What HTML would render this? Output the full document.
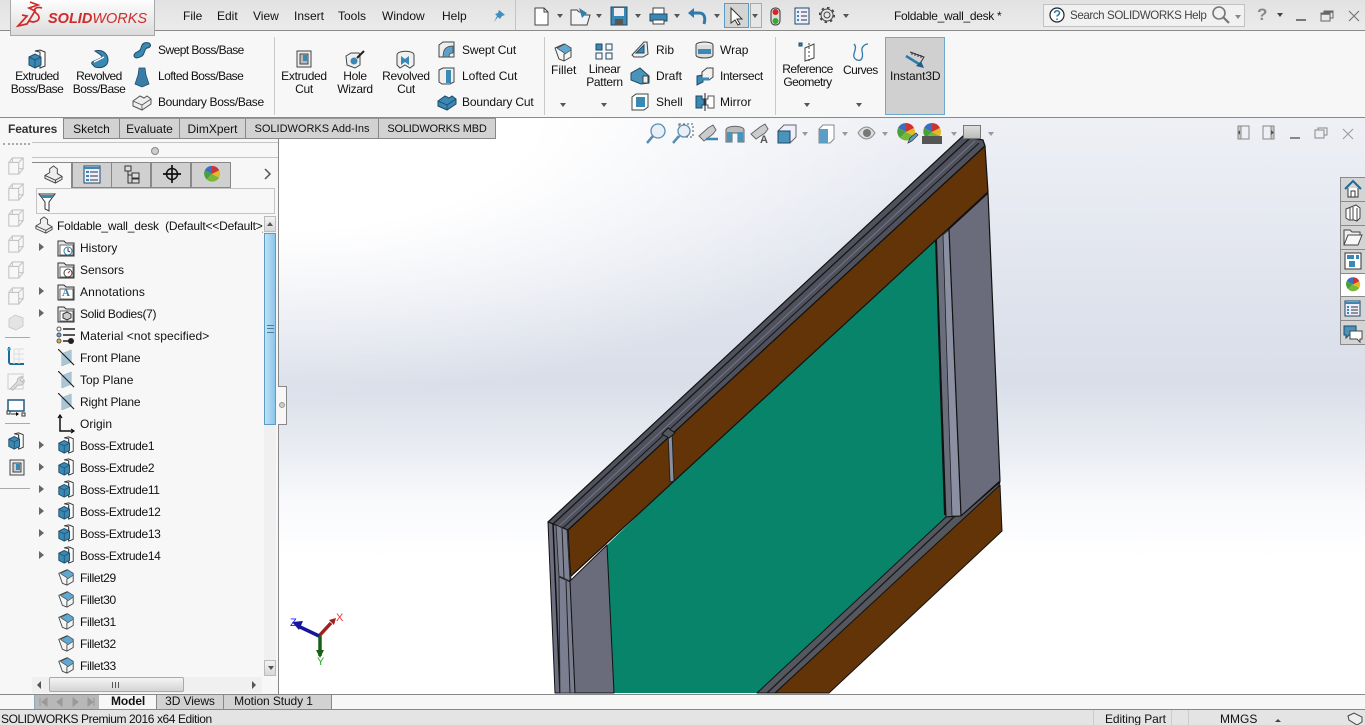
<!DOCTYPE html>
<html><head><meta charset="utf-8"><style>
html,body{margin:0;padding:0;width:1365px;height:725px;overflow:hidden;background:#fff}
body{position:relative;font:12px/14px "Liberation Sans",sans-serif;color:#111}
.a{position:absolute}
.t{position:absolute;white-space:nowrap}
.n{letter-spacing:-.35px}
.m{letter-spacing:-.15px}
.c{position:absolute;text-align:center;line-height:13px;white-space:nowrap;transform:translateX(-50%);letter-spacing:-.3px}
.b{letter-spacing:-.55px}
.tab{position:absolute;top:118px;height:21px;background:#d2d2d2;border-right:1px solid #888;border-bottom:1px solid #888;border-top:1px solid #999;box-sizing:border-box;text-align:center;line-height:20px}
.ft{position:absolute;top:162px;height:26px;width:40px;background:#d0d0d0;border:1px solid #888;box-sizing:border-box}
.tp{position:absolute;left:1340px;width:25px;background:#d4d4d4;border:1px solid #8a8a8a;border-right:0;box-sizing:border-box}
svg{position:absolute;overflow:visible}
.dd{position:absolute;width:0;height:0;border-left:3.5px solid transparent;border-right:3.5px solid transparent;border-top:4px solid #555}
.ar{position:absolute;left:39px;width:0;height:0;border-top:4px solid transparent;border-bottom:4px solid transparent;border-left:5px solid #666}
.btab{position:absolute;top:695px;height:14px;line-height:13px;text-align:center;background:#d2d2d2;border-right:1px solid #888;box-sizing:border-box;letter-spacing:-.1px}
</style></head><body>
<svg width="0" height="0" style="position:absolute">
<defs>
<symbol id="ext" viewBox="0 0 20 20"><path d="M8 2l5-1 5 2v14l-5 2V3z" fill="#fff" stroke="#333" stroke-width="1"/><path d="M13 3v16" stroke="#333"/><path d="M2 8l6-3 6 3v8l-6 3-6-3z" fill="#3a88b4" stroke="#1d4a66"/><path d="M2 8l6 3 6-3M8 11v8" fill="none" stroke="#1d4a66" stroke-width=".8"/></symbol>
<symbol id="fil" viewBox="0 0 20 20"><path d="M2 6l4 11 5 2 7-4V6l-7-4z" fill="#f5f5f5" stroke="#444"/><path d="M4 6c3 3 6 3 8 6l6-4V6l-6-4z" fill="#5fa8d0" stroke="#444" stroke-width=".7"/><path d="M11 19v-7" stroke="#444"/></symbol>
<symbol id="pln" viewBox="0 0 18 18"><path d="M4 5l10-4v13L4 18z" fill="#a9c6d6" stroke="#8aa" stroke-width=".5"/><path d="M0 0l17 17" stroke="#222" stroke-width="1.2"/></symbol>
<symbol id="fol" viewBox="0 0 18 18"><path d="M1 17V2h6l2 2h8v13z" fill="#e8e8e8" stroke="#333"/><rect x="3" y="6" width="13" height="10" fill="#fff" stroke="#444" stroke-width=".8"/></symbol>
<symbol id="cube" viewBox="0 0 20 20"><path d="M6 6V1h12v12h-5M2 6h11v13H2zM2 6l4-5M13 6l5-5M13 19l5-6" fill="none" stroke="#c4c4c4" stroke-width="1.2"/></symbol>
<symbol id="ball" viewBox="0 0 20 20"><path d="M10 10L10 1a9 9 0 0 1 8 5z" fill="#c33"/><path d="M10 10L2 6a9 9 0 0 1 8-5z" fill="#3a6fc0"/><path d="M10 10L2 6a9 9 0 0 0 2 10z" fill="#4a9f3a"/><path d="M10 10L4 16a9 9 0 0 0 14-2z" fill="#7ab63a"/><path d="M10 10l8-4a9 9 0 0 1 0 8z" fill="#e8b820"/></symbol>
<symbol id="part" viewBox="0 0 20 20"><path d="M1 11l5-3V4l4-3 4 3v5l5 3v3l-7 4-11-5z" fill="#eee" stroke="#444"/><path d="M1 11l11 5 7-4M12 16v3" fill="none" stroke="#444"/></symbol>
</defs></svg>

<!-- top bar -->
<div class="a" style="left:0;top:0;width:1365px;height:30px;background:linear-gradient(#e2e2e2,#ebebeb);border-bottom:1px solid #8a8a8a"></div>
<div class="a" style="left:0;top:31px;width:1365px;height:86px;background:#f7f7f7;border-bottom:1px solid #8a8a8a"></div>
<div class="a" style="left:10px;top:-2px;width:143px;height:36px;background:linear-gradient(#fff,#e6e6e6 70%,#dcdcdc);border:1px solid #a8a8a8;box-sizing:content-box"></div>
<svg style="left:15px;top:1px" width="30" height="28" fill="none" stroke="#cf2a2a" stroke-width="1.7"><path d="M15 1l8 3-9 3 6 3-8 13-9 2 9-10-5-1"/><path d="M27 7c-7-2-9 2-6 5 4 3 5 8-3 9l-4-1"/></svg>
<div class="t" style="left:48px;top:11px;font:italic bold 14.5px/16px 'Liberation Sans',sans-serif;color:#cf2a2a">SOLID<span style="font-weight:normal">WORKS</span></div>
<div class="t" style="left:183px;top:9px">File</div><div class="t" style="left:217px;top:9px">Edit</div><div class="t" style="left:253px;top:9px">View</div><div class="t" style="left:294px;top:9px">Insert</div><div class="t" style="left:338px;top:9px">Tools</div><div class="t" style="left:382px;top:9px">Window</div><div class="t" style="left:442px;top:9px">Help</div>
<svg style="left:492px;top:9px" width="14" height="14"><path d="M7 1l6 5-3 1-2 3-2-2-4 5 3-6-2-2 3-1z" fill="#3d8fc0"/></svg>
<div class="a" style="left:515px;top:0;width:1px;height:30px;background:#c4c4c4"></div>

<!-- QAT -->
<svg style="left:533px;top:7px" width="18" height="20"><path d="M2 1h9l4 4v13H2z" fill="#fff" stroke="#444"/><path d="M11 1v4h4" fill="none" stroke="#444"/></svg>
<div class="dd" style="left:557px;top:14px"></div>
<svg style="left:570px;top:7px" width="22" height="20"><path d="M1 18V3h6l2 2h5v3h6l-3 10z" fill="#f4f4f4" stroke="#444"/><path d="M9 1l8 5-5 5z" fill="#2f80ad"/></svg>
<div class="dd" style="left:596px;top:14px"></div>
<svg style="left:610px;top:6px" width="18" height="20"><path d="M1 1h16v18H1z" fill="#3a88b4" stroke="#1d4a66"/><rect x="4" y="2" width="10" height="8" fill="#eee"/><rect x="5" y="13" width="8" height="6" fill="#555"/></svg>
<div class="dd" style="left:635px;top:14px"></div>
<svg style="left:649px;top:7px" width="19" height="19"><rect x="4" y="1" width="11" height="6" fill="#fff" stroke="#444"/><rect x="1" y="7" width="17" height="7" fill="#3a88b4" stroke="#1d4a66"/><rect x="4" y="13" width="11" height="4" fill="#fff" stroke="#444"/></svg>
<div class="dd" style="left:674px;top:14px"></div>
<svg style="left:687px;top:7px" width="20" height="18" fill="none"><path d="M6 6h6c5 0 7 4 5 11" stroke="#2f7aa8" stroke-width="3"/><path d="M7 1L1 6l6 5z" fill="#2f7aa8"/></svg>
<div class="dd" style="left:714px;top:14px"></div>
<div class="a" style="left:724px;top:3px;width:25px;height:25px;background:#d4d4d4;border:1px solid #5a9cc4;box-sizing:border-box"></div>
<svg style="left:729px;top:7px" width="16" height="19"><path d="M2 1v15l4-3 3 5 2-1-3-5h5z" fill="#fff" stroke="#333"/></svg>
<div class="a" style="left:750px;top:3px;width:12px;height:25px;background:#e6e6e6;border:1px solid #aaa;box-sizing:border-box"></div>
<div class="dd" style="left:752px;top:14px"></div>
<svg style="left:770px;top:7px" width="12" height="20"><rect x="1" y="1" width="9" height="17" rx="4" fill="#ddd" stroke="#333"/><circle cx="5.5" cy="5" r="3" fill="#d22"/><circle cx="5.5" cy="14" r="3" fill="#3a3"/></svg>
<svg style="left:794px;top:7px" width="16" height="18"><rect x="1" y="1" width="14" height="16" fill="#eef" stroke="#1d4a66"/><path d="M3 5h2M3 9h2M3 13h2" stroke="#3a88b4" stroke-width="2"/><path d="M7 5h6M7 9h6M7 13h6" stroke="#333"/></svg>
<svg style="left:819px;top:7px" width="16" height="16" fill="none" stroke="#444"><circle cx="8" cy="8" r="3"/><circle cx="8" cy="8" r="6"/><circle cx="8" cy="8" r="7.3" stroke-dasharray="2.5 3.2" stroke-width="1.6"/></svg>
<div class="dd" style="left:843px;top:14px"></div>
<div class="t" style="left:894px;top:9px;letter-spacing:-.3px">Foldable_wall_desk *</div>

<!-- search -->
<div class="a" style="left:1043px;top:4px;width:202px;height:23px;background:#f1f1f1;border:1px solid #c2c2c2;box-sizing:border-box"></div>
<svg style="left:1049px;top:7px" width="16" height="16"><circle cx="8" cy="8" r="7" fill="#fff" stroke="#222" stroke-width="1.2"/><path d="M5.5 6c.4-3 5-3 5 0 0 2-2.5 2-2.5 3.5M8 11.5v1.5" fill="none" stroke="#2a7fae" stroke-width="1.6"/></svg>
<div class="t" style="left:1070px;top:9px;color:#444;letter-spacing:-.42px;font-size:11.6px">Search SOLIDWORKS Help</div>
<svg style="left:1211px;top:5px" width="20" height="20" fill="none" stroke="#777" stroke-width="1.6"><circle cx="8" cy="8" r="6"/><path d="M12 12l6 6" stroke-width="2.2"/></svg>
<div class="dd" style="left:1235px;top:15px;border-top-color:#888"></div>
<div class="t" style="left:1257px;top:5px;font:bold 17px/20px 'Liberation Sans',sans-serif;color:#888">?</div>
<div class="dd" style="left:1277px;top:13px;border-top-color:#444"></div>
<div class="a" style="left:1296px;top:19px;width:10px;height:2px;background:#777"></div>
<svg style="left:1320px;top:10px" width="14" height="12" fill="none" stroke="#666"><path d="M4 3V1h9v7h-3"/><rect x="1" y="3" width="9" height="8"/><path d="M1 4h9M4 2h9" stroke-width="1.5"/></svg>
<svg style="left:1348px;top:10px" width="12" height="12" stroke="#777" stroke-width="1.2"><path d="M1 1l10 10M11 1L1 11"/></svg>

<!-- ribbon icons and text -->
<svg style="left:27px;top:49px" width="20" height="20"><use href="#ext"/></svg>
<div class="c b" style="left:37px;top:70px">Extruded<br>Boss/Base</div>
<svg style="left:90px;top:49px" width="20" height="20"><path d="M5 2c8-2 13 3 13 9s-6 9-13 7l-3-3c-2-3 5-3 10-7 0-2-3-3-7-6z" fill="#3a88b4" stroke="#1d4a66"/><path d="M4 13l10-5" stroke="#fff" stroke-width="1.5"/></svg>
<div class="c b" style="left:99px;top:70px">Revolved<br>Boss/Base</div>
<svg style="left:132px;top:41px" width="20" height="18"><path d="M2 15c0-5 6-3 7-8s4-6 8-5c3 2 1 5-2 5-3 1-2 6-5 8-3 2-7 3-8 0z" fill="#3a88b4" stroke="#1d4a66"/></svg>
<div class="t b" style="left:158px;top:43px">Swept Boss/Base</div>
<svg style="left:134px;top:67px" width="16" height="20"><path d="M5 1h6l1 7 3 9-7 3-7-3 3-9z" fill="#3a7ca8" stroke="#1d4a66" stroke-width=".7"/></svg>
<div class="t b" style="left:158px;top:69px">Lofted Boss/Base</div>
<svg style="left:132px;top:93px" width="20" height="18"><path d="M1 8l7-5 4 2 3-2 4 3v5l-9 6-9-4z" fill="#eee" stroke="#555"/><path d="M1 8l9 4 9-6M10 12v5" fill="none" stroke="#555" stroke-width=".8"/></svg>
<div class="t n" style="left:158px;top:95px">Boundary Boss/Base</div>
<div class="a" style="left:274px;top:37px;width:1px;height:78px;background:#c8c8c8"></div>
<svg style="left:296px;top:50px" width="16" height="18"><rect x="1" y="1" width="14" height="16" fill="#eee" stroke="#444"/><rect x="4" y="4" width="8" height="10" fill="#bbb" stroke="#444"/><rect x="7" y="5" width="4" height="6" fill="#3a88b4"/></svg>
<div class="c" style="left:304px;top:70px">Extruded<br>Cut</div>
<svg style="left:345px;top:50px" width="20" height="20"><path d="M1 6l5-3h8l1 3v9l-5 3-8-3z" fill="#f0f0f0" stroke="#444"/><circle cx="9" cy="11" r="3.5" fill="#3a88b4"/><path d="M12 8l7-7" stroke="#222" stroke-width="2"/></svg>
<div class="c" style="left:355px;top:70px">Hole<br>Wizard</div>
<svg style="left:396px;top:50px" width="20" height="20"><path d="M1 5c0-5 17-5 17 0v10l-4 3-5-3-5 3-3-3z" fill="#f0f0f0" stroke="#444"/><path d="M5 6l4 3 4-3v9l-4-3-4 3z" fill="#3a88b4"/></svg>
<div class="c" style="left:406px;top:70px">Revolved<br>Cut</div>
<svg style="left:438px;top:41px" width="18" height="18"><path d="M1 4l4-3h11v15H1z" fill="#eee" stroke="#444"/><path d="M5 16c0-8 3-11 10-11v7c-3 0-4 1-4 4z" fill="#5fa0c8" stroke="#444" stroke-width=".7"/></svg>
<div class="t m" style="left:462px;top:43px">Swept Cut</div>
<svg style="left:438px;top:67px" width="17" height="18"><path d="M1 3l4-2h11v14l-4 2H4l-3-2z" fill="#eee" stroke="#444"/><path d="M8 3h5v13H8z" fill="#3a88b4"/></svg>
<div class="t" style="left:462px;top:69px">Lofted Cut</div>
<svg style="left:437px;top:93px" width="20" height="18"><path d="M1 8l7-5 4 2 3-2 4 3v5l-9 6-9-4z" fill="#3a88b4" stroke="#1d4a66"/><path d="M1 8l9 4 9-6M10 12v5" fill="none" stroke="#1d4a66" stroke-width=".8"/></svg>
<div class="t m" style="left:462px;top:95px">Boundary Cut</div>
<div class="a" style="left:544px;top:37px;width:1px;height:78px;background:#c8c8c8"></div>
<svg style="left:553px;top:42px" width="20" height="20"><use href="#fil"/></svg>
<div class="t" style="left:551px;top:63px">Fillet</div>
<div class="dd" style="left:560px;top:103px"></div>
<svg style="left:595px;top:43px" width="18" height="17" fill="none" stroke="#1d4a66"><rect x="1" y="1" width="6" height="6" fill="#3a88b4"/><rect x="11" y="1" width="6" height="6"/><rect x="1" y="10" width="6" height="6"/><rect x="11" y="10" width="6" height="6"/></svg>
<div class="c" style="left:604.5px;top:63px">Linear<br>Pattern</div>
<div class="dd" style="left:601px;top:103px"></div>
<svg style="left:631px;top:41px" width="18" height="18"><path d="M1 14L13 1h3l1 12-5 3H3z" fill="#eee" stroke="#444"/><path d="M5 12l8-8v8z" fill="#3a88b4" stroke="#1d4a66"/></svg>
<div class="t" style="left:656px;top:43px">Rib</div>
<svg style="left:630px;top:67px" width="20" height="18"><path d="M1 6l9-5 9 8v7l-8 1-10-4z" fill="#4a94bc" stroke="#1d4a66"/><path d="M13 9h5v7h-5z" fill="#eee" stroke="#444"/></svg>
<div class="t" style="left:656px;top:69px">Draft</div>
<svg style="left:631px;top:93px" width="18" height="18"><path d="M1 4l4-3h12v13l-4 3H1z" fill="#fff" stroke="#444"/><path d="M5 4h9v10H5z" fill="#3a88b4"/></svg>
<div class="t" style="left:656px;top:95px">Shell</div>
<svg style="left:695px;top:41px" width="19" height="18"><ellipse cx="9.5" cy="4" rx="8.5" ry="3" fill="#eee" stroke="#444"/><path d="M1 4v10c0 4 17 4 17 0V4" fill="#ddd" stroke="#444"/><rect x="3" y="8" width="13" height="5" fill="#3a88b4"/></svg>
<div class="t" style="left:720px;top:43px">Wrap</div>
<svg style="left:696px;top:67px" width="18" height="19"><path d="M1 9l6-1v7l-6 3z" fill="#3a88b4" stroke="#1d4a66"/><path d="M6 5l5-4h6v9l-4 3H6z" fill="#f0f0f0" stroke="#444"/><path d="M4 12h9" stroke="#3a88b4" stroke-width="3"/></svg>
<div class="t n" style="left:720px;top:69px">Intersect</div>
<svg style="left:695px;top:93px" width="20" height="18"><path d="M1 3h6v3h2v6H7v3H1z" fill="#3a88b4" stroke="#1d4a66"/><path d="M19 3h-6v3h-2v6h2v3h6z" fill="#fff" stroke="#555"/><path d="M10 0v18" stroke="#222"/></svg>
<div class="t" style="left:720px;top:95px">Mirror</div>
<div class="a" style="left:775px;top:37px;width:1px;height:78px;background:#c8c8c8"></div>
<svg style="left:798px;top:42px" width="18" height="20"><rect x="1" y="1" width="3" height="3" fill="#3a88b4" stroke="#1d4a66"/><path d="M7 6l9-4v14l-9 3z" fill="#fff" stroke="#444"/><path d="M11 1v18" stroke="#444" stroke-dasharray="2 2"/></svg>
<div class="c b" style="left:807.5px;top:63px">Reference<br>Geometry</div>
<div class="dd" style="left:804px;top:103px"></div>
<svg style="left:851px;top:43px" width="18" height="19" fill="none" stroke="#2f7aa8" stroke-width="1.3"><path d="M3 1c5 5-5 12 3 16 6 2 6-5 5-9-1-4 3-7 6-7"/></svg>
<div class="t b" style="left:843px;top:63px">Curves</div>
<div class="dd" style="left:856px;top:103px"></div>
<div class="a" style="left:885px;top:37px;width:60px;height:78px;background:#d0d0d0;border:1px solid #6fa8cc;box-sizing:border-box"></div>
<svg style="left:905px;top:50px" width="20" height="19"><path d="M5 2l14 5-3 5" fill="none" stroke="#333"/><path d="M7 2v3M10 3v3M13 4v3M16 5v3" stroke="#333"/><path d="M1 6l13 8" stroke="#2f7aa8" stroke-width="2.5"/><path d="M11 16l8 2-3-7z" fill="#1f5f86"/></svg>
<div class="t" style="left:890px;top:69px;letter-spacing:-.1px">Instant3D</div>

<!-- viewport -->
<div class="a" style="left:279px;top:118px;width:1086px;height:576px;background:radial-gradient(ellipse 640px 280px at 0 0,#fff 40%,rgba(255,255,255,0) 100%),linear-gradient(#eef0f5 0,#e6e9f1 100px,#dde1eb 210px,#d9dee9 265px,#e9ecf2 330px,#f9fafc 385px,#fff 440px)"></div>

<svg style="left:0;top:0" width="1365" height="694" viewBox="0 0 1365 694">
<g stroke-linejoin="round">
<!-- green -->
<polygon points="607,545 672,482 936,240 946,517 757,693 614,693" fill="#07846a"/>
<!-- inner strip right -->
<polygon points="936,238 950,228 962,516 946,517" fill="#6a6d7c" stroke="#111" stroke-width="1"/>
<polygon points="943,235 949,230 961,516 952,516" fill="#8b8fa2" stroke="#222" stroke-width=".8"/>
<line x1="936" y1="240" x2="945" y2="515" stroke="#111" stroke-width="2"/>
<!-- upper right panel -->
<polygon points="949,229 988,193 1000,481 961,516" fill="#6a6c7b" stroke="#111" stroke-width="1.2"/>
<!-- top grey strip -->
<polygon points="548,522 963,136 983,140 985,146 568,530 558,526" fill="#4f515c" stroke="#111" stroke-width="1.2"/>
<line x1="553" y1="524" x2="970" y2="138" stroke="#16161a" stroke-width="1.3"/>
<line x1="558" y1="527" x2="975" y2="141" stroke="#74778a" stroke-width="1"/>
<line x1="562" y1="529" x2="979" y2="143" stroke="#16161a" stroke-width="1"/>
<!-- brown -->
<polygon points="568,530 985,146 988,192 570,577" fill="#623408" stroke="#111" stroke-width="1.2"/>
<!-- divider -->
<polygon points="668,432 672,431 674,481 670,482" fill="#8b8fa2" stroke="#222" stroke-width="1"/>
<polygon points="662,434 668,428 675,433 669,438" fill="#55575f" stroke="#111" stroke-width="1"/>
<!-- left strips -->
<polygon points="548,522 558,526 568,530 571,582 575,693 555,693" fill="#6d6f80" stroke="#111" stroke-width="1"/>
<polygon points="556,525 567,530 570,581 559,576" fill="#7f8294" stroke="#222" stroke-width=".8"/>
<line x1="553" y1="524" x2="560" y2="693" stroke="#111" stroke-width="1.5"/>
<line x1="562" y1="528" x2="564" y2="578" stroke="#222" stroke-width="1"/>
<polygon points="559,577 570,582 575,693 560,693" fill="#7b7e90" stroke="#222" stroke-width=".8"/>
<line x1="566" y1="581" x2="570" y2="693" stroke="#222" stroke-width="1"/>
<!-- lower left panel -->
<polygon points="570,581 607,545 614,693 575,693" fill="#6a6c7b" stroke="#111" stroke-width="1"/>
<!-- bottom grey strip -->
<polygon points="946,517 961,516 1000,482 998,488 775,693 757,693" fill="#55575f" stroke="#111" stroke-width="1"/>
<line x1="955" y1="516" x2="767" y2="693" stroke="#1a1a20" stroke-width="1.3"/>
<!-- bottom brown -->
<polygon points="1000,485 1002,531 829,693 775,693" fill="#623408" stroke="#111" stroke-width="1"/>
</g>
</svg>
<!-- triad -->
<svg style="left:285px;top:610px" width="60" height="60"><path d="M34 26L46 13" stroke="#a02020" stroke-width="3.5"/><path d="M44 10l7-2-2 7z" fill="#a02020"/><path d="M34 26L13 16" stroke="#16169c" stroke-width="3.5"/><path d="M18 11L7 12l7 8z" fill="#16169c"/><path d="M35 26v20" stroke="#176017" stroke-width="3.5"/><path d="M31 40h8l-4 8z" fill="#176017"/></svg>
<div class="t" style="left:290px;top:616px;color:#22f;font-size:11px">Z</div>
<div class="t" style="left:336px;top:611px;color:#e33;font-size:11px">X</div>
<div class="t" style="left:317px;top:655px;color:#2a2;font-size:11px">Y</div>

<!-- heads-up -->
<svg style="left:645px;top:123px" width="22" height="22"><circle cx="13" cy="8" r="7" fill="#e8f0f6" stroke="#5a8db0" stroke-width="1.3"/><path d="M8 13l-6 7" stroke="#5a8db0" stroke-width="2.5"/></svg>
<svg style="left:672px;top:123px" width="22" height="22"><rect x="7" y="1" width="14" height="13" fill="none" stroke="#555" stroke-dasharray="2 2"/><circle cx="12" cy="8" r="6" fill="#e8f0f6" stroke="#5a8db0" stroke-width="1.3"/><path d="M7 13l-6 7" stroke="#5a8db0" stroke-width="2.5"/></svg>
<svg style="left:698px;top:124px" width="22" height="20"><path d="M1 12l9-8 5-3 3 5-3 4-9 7z" fill="#ccc" stroke="#666"/><path d="M8 15h12" stroke="#3a88b4" stroke-width="2.5"/></svg>
<svg style="left:725px;top:125px" width="20" height="18"><path d="M1 5c0-5 18-5 18 0v12h-6V8H7v9H1z" fill="#bbb" stroke="#666"/><rect x="2" y="7" width="5" height="10" fill="#4a94bc"/><rect x="13" y="7" width="5" height="10" fill="#4a94bc"/></svg>
<svg style="left:750px;top:123px" width="20" height="20"><path d="M1 11l9-7 5-3 3 5-3 4-9 6z" fill="#ccc" stroke="#666"/></svg>
<div class="t" style="left:760px;top:133px;font-weight:bold;color:#555;font-size:11px">A</div>
<svg style="left:777px;top:124px" width="20" height="20"><path d="M1 7l6-6h12v12l-6 6H1z" fill="#eef" stroke="#666"/><rect x="1" y="7" width="12" height="12" fill="#4a94bc" stroke="#1d4a66"/></svg>
<div class="dd" style="left:802px;top:132px;border-top-color:#999"></div>
<svg style="left:818px;top:124px" width="17" height="20"><path d="M1 5l4-4h11v14l-4 4H1z" fill="#fff" stroke="#888"/><rect x="1" y="5" width="9" height="14" fill="#5a9fc6"/></svg>
<div class="dd" style="left:842px;top:132px;border-top-color:#999"></div>
<svg style="left:857px;top:125px" width="19" height="16"><path d="M1 8c5-8 12-8 17 0-5 8-12 8-17 0z" fill="#ddd" stroke="#888"/><circle cx="10" cy="8" r="4" fill="#777"/></svg>
<div class="dd" style="left:882px;top:132px;border-top-color:#999"></div>
<svg style="left:896px;top:122px" width="20" height="20"><use href="#ball"/></svg>
<svg style="left:907px;top:132px" width="11" height="12"><path d="M1 11l2-5 6-5 2 2-6 6z" fill="#5a9fc6" stroke="#333" stroke-width=".7"/></svg>
<svg style="left:922px;top:122px" width="20" height="20"><use href="#ball"/></svg>
<div class="a" style="left:922px;top:136px;width:20px;height:8px;background:#555"></div>
<div class="dd" style="left:951px;top:132px;border-top-color:#999"></div>
<div class="a" style="left:963px;top:125px;width:18px;height:14px;background:linear-gradient(#ddd,#bbb);border:1px solid #777;box-sizing:border-box"></div>
<div class="dd" style="left:988px;top:132px;border-top-color:#999"></div>

<!-- viewport window controls -->
<svg style="left:1237px;top:125px" width="14" height="16"><rect x="1" y="1" width="11" height="13" fill="none" stroke="#888"/><path d="M1 1h3v13H1z" fill="#ccc" stroke="#888"/><path d="M3 5v5l-2-2.5z" fill="#555"/></svg>
<svg style="left:1262px;top:125px" width="14" height="16"><rect x="1" y="1" width="11" height="13" fill="none" stroke="#888"/><path d="M9 1h3v13H9z" fill="#ccc" stroke="#888"/><path d="M9 5v5l3-2.5z" fill="#555"/></svg>
<div class="a" style="left:1290px;top:137px;width:10px;height:2px;background:#888"></div>
<svg style="left:1314px;top:127px" width="14" height="12" fill="none" stroke="#888"><path d="M4 3V1h9v7h-3"/><rect x="1" y="3" width="9" height="8"/></svg>
<svg style="left:1342px;top:128px" width="12" height="12" stroke="#999"><path d="M1 1l10 10M11 1L1 11"/></svg>

<!-- task pane -->
<div class="tp" style="top:177px;height:25px"></div><div class="tp" style="top:201px;height:25px"></div><div class="tp" style="top:225px;height:25px"></div><div class="tp" style="top:249px;height:25px"></div><div class="tp" style="top:273px;height:24px;background:#fff"></div><div class="tp" style="top:296px;height:25px"></div><div class="tp" style="top:320px;height:25px"></div>
<svg style="left:1344px;top:180px" width="18" height="18"><path d="M1 9l8-8 8 8" fill="none" stroke="#1d6a96" stroke-width="2"/><path d="M4 8v9h10V8" fill="#fff" stroke="#333"/><rect x="7" y="11" width="4" height="6" fill="none" stroke="#333"/></svg>
<svg style="left:1345px;top:204px" width="16" height="18" fill="#fff" stroke="#444"><path d="M1 5l10-4 4 3v10l-3 3-3-1H4l-3-2z"/><path d="M5 4v12M8 3v13M12 4v13"/></svg>
<svg style="left:1343px;top:228px" width="20" height="18"><path d="M1 17V2h6l2 2h8v3" fill="#eee" stroke="#444"/><path d="M1 17l4-10h14l-4 10z" fill="#f8f8f8" stroke="#444"/></svg>
<svg style="left:1344px;top:252px" width="18" height="18"><rect x="1" y="1" width="16" height="16" fill="#fff" stroke="#333"/><path d="M3 3h7v4H3zM5 9h6v6H5z" fill="#3a88b4"/><path d="M12 3h3v4h-3z" fill="#3a88b4"/></svg>
<svg style="left:1345px;top:276px" width="16" height="17" viewBox="0 0 20 20"><use href="#ball"/></svg>
<svg style="left:1344px;top:300px" width="17" height="17"><rect x="1" y="1" width="15" height="15" fill="#eef" stroke="#1d4a66"/><path d="M1 3h15" stroke="#3a88b4" stroke-width="2"/><path d="M3 7h2M3 10h2M3 13h2" stroke="#3a88b4" stroke-width="2"/><path d="M7 7h7M7 10h7M7 13h7" stroke="#333"/></svg>
<svg style="left:1343px;top:325px" width="20" height="18"><path d="M1 1h12v9H6l-3 3v-3H1z" fill="#4a94bc" stroke="#1d4a66"/><path d="M7 6h12v8h-2v3l-3-3H7z" fill="#fff" stroke="#444"/></svg>

<!-- tabs -->
<div class="a" style="left:0;top:118px;width:64px;height:22px;background:#f7f7f7;border-right:1px solid #888;box-sizing:border-box"></div>
<div class="t" style="left:8px;top:122px;font-weight:bold;color:#333;letter-spacing:-.1px">Features</div>
<div class="tab" style="left:64px;width:56px">Sketch</div><div class="tab" style="left:120px;width:60px">Evaluate</div><div class="tab" style="left:180px;width:66px">DimXpert</div><div class="tab" style="left:246px;width:133px;font-size:11px">SOLIDWORKS Add-Ins</div><div class="tab" style="left:379px;width:117px;font-size:11px;letter-spacing:-.2px">SOLIDWORKS MBD</div>

<!-- left panel -->
<div class="a" style="left:0;top:139px;width:279px;height:555px;background:#f7f7f7;border-right:1px solid #888;box-sizing:border-box"></div>
<div class="a" style="left:3px;top:143px;width:27px;height:0;border-top:2px dotted #aaa"></div>
<div class="a" style="left:32px;top:142px;width:246px;height:1px;background:#c4c4c4"></div>
<div class="a" style="left:32px;top:157px;width:246px;height:1px;background:#c4c4c4"></div>
<div class="a" style="left:151px;top:147px;width:6px;height:6px;background:#ccc;border:1px solid #888;border-radius:50%"></div>
<svg style="left:7px;top:157px" width="18" height="18"><use href="#cube"/></svg>
<svg style="left:7px;top:183px" width="18" height="18"><use href="#cube"/></svg>
<svg style="left:7px;top:209px" width="18" height="18"><use href="#cube"/></svg>
<svg style="left:7px;top:235px" width="18" height="18"><use href="#cube"/></svg>
<svg style="left:7px;top:261px" width="18" height="18"><use href="#cube"/></svg>
<svg style="left:7px;top:287px" width="18" height="18"><use href="#cube"/></svg>
<svg style="left:7px;top:313px" width="18" height="18"><path d="M2 6l6-4 8 3v8l-7 4-7-3z" fill="#e4e4e4" stroke="#ccc"/></svg>
<div class="a" style="left:5px;top:337px;width:25px;height:1px;background:#aaa"></div>
<svg style="left:6px;top:346px" width="20" height="19"><path d="M3 1v15c0 1 1 2 2 2h13" fill="none" stroke="#1d6a96" stroke-width="2"/><path d="M8 3h10M8 8h10M8 13h10M8 3v15M13 3v15" stroke="#ddd"/><path d="M1 3l3-2 1 3-3 1z" fill="#3a9fd0"/></svg>
<svg style="left:7px;top:373px" width="18" height="18"><rect x="1" y="1" width="15" height="15" fill="none" stroke="#ccc"/><path d="M3 16l7-7c0-4 3-6 6-5l-3 3 2 2 2-2c1 3-2 6-6 5l-5 5z" fill="#ddd" stroke="#bbb"/></svg>
<svg style="left:6px;top:399px" width="20" height="20"><rect x="2" y="1" width="16" height="11" fill="#fff" stroke="#1d5a80" stroke-width="1.5"/><rect x="1" y="12" width="3" height="3" fill="#fff" stroke="#333"/><path d="M5 15h7" stroke="#333"/><path d="M10 13l3 2-3 2z"/><rect x="16" y="14" width="3" height="3" fill="#fff" stroke="#333"/></svg>
<div class="a" style="left:5px;top:423px;width:25px;height:1px;background:#aaa"></div>
<svg style="left:7px;top:432px" width="18" height="18"><use href="#ext"/></svg>
<svg style="left:9px;top:459px" width="16" height="17"><rect x="1" y="1" width="14" height="15" fill="#eee" stroke="#444"/><rect x="4" y="4" width="8" height="9" fill="#ccc" stroke="#444"/><rect x="7" y="5" width="4" height="6" fill="#3a88b4"/></svg>
<div class="a" style="left:0;top:488px;width:30px;height:1px;background:#aaa"></div>

<!-- feature manager tabs -->
<div class="a" style="left:32px;top:162px;width:40px;height:27px;border-top:1px solid #888;border-right:1px solid #888;box-sizing:border-box"></div>
<svg style="left:44px;top:165px" width="19" height="19"><use href="#part"/></svg>
<div class="ft" style="left:72px"></div><div class="ft" style="left:111px"></div><div class="ft" style="left:151px"></div><div class="ft" style="left:191px"></div>
<svg style="left:83px;top:165px" width="18" height="19"><rect x="1" y="1" width="16" height="17" fill="#eef" stroke="#1d4a66"/><path d="M1 3h16" stroke="#3a88b4" stroke-width="2"/><path d="M3 7h3M3 11h3M3 15h3" stroke="#3a88b4" stroke-width="2"/><path d="M7 7h8M7 11h8M7 15h8" stroke="#333"/></svg>
<svg style="left:124px;top:165px" width="16" height="19" fill="#ddd" stroke="#333"><rect x="1" y="1" width="6" height="5"/><rect x="8" y="8" width="7" height="5"/><path d="M4 6v12h4M4 10h4" fill="none"/><rect x="8" y="14" width="7" height="4"/></svg>
<svg style="left:163px;top:165px" width="18" height="18" fill="none" stroke="#111" stroke-width="1.5"><circle cx="9" cy="9" r="5.5"/><path d="M9 0v18M0 9h18" stroke-width="1.7"/></svg>
<svg style="left:203px;top:165px" width="18" height="18" viewBox="0 0 20 20"><use href="#ball"/></svg>
<svg style="left:264px;top:168px" width="8" height="12" fill="none" stroke="#555" stroke-width="1.5"><path d="M1 1l5 5-5 5"/></svg>
<div class="a" style="left:36px;top:188px;width:239px;height:26px;border:1px solid #c4c4c4;box-sizing:border-box"></div>
<svg style="left:38px;top:192px" width="18" height="20"><path d="M1 2h16L11 10v9l-4-2v-7z" fill="#fff" stroke="#333"/><path d="M2 3h14l-2 3H4z" fill="#3a88b4"/></svg>

<!-- tree -->
<svg style="left:35px;top:216px" width="18" height="18"><use href="#part"/></svg>
<div class="t" style="left:57px;top:219px;width:206px;overflow:hidden;letter-spacing:-.2px">Foldable_wall_desk&nbsp; (Default&lt;&lt;Default&gt;_Display</div>

<div class="ar" style="top:243px"></div><svg style="left:57px;top:239px" width="18" height="18"><use href="#fol"/></svg><svg style="left:62px;top:245px" width="11" height="11"><circle cx="6" cy="6" r="4" fill="#fff" stroke="#2f7aa8"/><path d="M6 3v3l2 1" stroke="#333" fill="none"/></svg><div class="t" style="left:80px;top:241px">History</div>
<svg style="left:57px;top:261px" width="18" height="18"><use href="#fol"/></svg><svg style="left:62px;top:267px" width="11" height="11"><circle cx="6" cy="6" r="4" fill="#fff" stroke="#444"/><path d="M6 6l2-2" stroke="#d22"/></svg><div class="t" style="left:80px;top:263px">Sensors</div>
<div class="ar" style="top:287px"></div><svg style="left:57px;top:283px" width="18" height="18"><use href="#fol"/></svg><div class="t" style="left:62px;top:287px;font:bold 11px/12px 'Liberation Serif',serif;color:#2f7aa8">A</div><div class="t" style="left:80px;top:285px;letter-spacing:.15px">Annotations</div>
<div class="ar" style="top:309px"></div><svg style="left:57px;top:305px" width="18" height="18"><use href="#fol"/></svg><svg style="left:62px;top:311px" width="10" height="10"><path d="M1 3l4-2 4 2v4l-4 2-4-2z" fill="#ccc" stroke="#333"/></svg><div class="t n" style="left:80px;top:307px">Solid Bodies(7)</div>
<svg style="left:56px;top:326px" width="20" height="20"><circle cx="3" cy="3" r="2" fill="#fff" stroke="#555"/><circle cx="3" cy="9" r="2" fill="#5fa8d0" stroke="#555"/><circle cx="3" cy="15" r="2" fill="#e8b820" stroke="#555"/><path d="M7 3h12M7 9h12M7 15h6" stroke="#222" stroke-width="1.5"/><circle cx="15" cy="15" r="3" fill="#222"/></svg><div class="t" style="left:80px;top:329px;letter-spacing:.08px">Material &lt;not specified&gt;</div>
<svg style="left:58px;top:349px" width="17" height="17"><use href="#pln"/></svg><div class="t m" style="left:80px;top:351px">Front Plane</div>
<svg style="left:58px;top:371px" width="17" height="17"><use href="#pln"/></svg><div class="t" style="left:80px;top:373px">Top Plane</div>
<svg style="left:58px;top:393px" width="17" height="17"><use href="#pln"/></svg><div class="t m" style="left:80px;top:395px">Right Plane</div>
<svg style="left:57px;top:414px" width="19" height="19" fill="none" stroke="#111" stroke-width="1.5"><path d="M3 2v15h14"/><path d="M1 4l2-3 2 3M14 15l3 2-3 2" stroke-width="1.2"/></svg><div class="t" style="left:80px;top:417px">Origin</div>

<div class="ar" style="top:441px"></div><svg style="left:57px;top:436px" width="18" height="18"><use href="#ext"/></svg><div class="t n" style="left:80px;top:439px">Boss-Extrude1</div>
<div class="ar" style="top:463px"></div><svg style="left:57px;top:458px" width="18" height="18"><use href="#ext"/></svg><div class="t n" style="left:80px;top:461px">Boss-Extrude2</div>
<div class="ar" style="top:485px"></div><svg style="left:57px;top:480px" width="18" height="18"><use href="#ext"/></svg><div class="t n" style="left:80px;top:483px">Boss-Extrude11</div>
<div class="ar" style="top:507px"></div><svg style="left:57px;top:502px" width="18" height="18"><use href="#ext"/></svg><div class="t n" style="left:80px;top:505px">Boss-Extrude12</div>
<div class="ar" style="top:529px"></div><svg style="left:57px;top:524px" width="18" height="18"><use href="#ext"/></svg><div class="t n" style="left:80px;top:527px">Boss-Extrude13</div>
<div class="ar" style="top:551px"></div><svg style="left:57px;top:546px" width="18" height="18"><use href="#ext"/></svg><div class="t n" style="left:80px;top:549px">Boss-Extrude14</div>
<svg style="left:57px;top:568px" width="18" height="18"><use href="#fil"/></svg><div class="t n" style="left:80px;top:571px">Fillet29</div>
<svg style="left:57px;top:590px" width="18" height="18"><use href="#fil"/></svg><div class="t n" style="left:80px;top:593px">Fillet30</div>
<svg style="left:57px;top:612px" width="18" height="18"><use href="#fil"/></svg><div class="t n" style="left:80px;top:615px">Fillet31</div>
<svg style="left:57px;top:634px" width="18" height="18"><use href="#fil"/></svg><div class="t n" style="left:80px;top:637px">Fillet32</div>
<svg style="left:57px;top:656px" width="18" height="18"><use href="#fil"/></svg><div class="t n" style="left:80px;top:659px">Fillet33</div>

<!-- scrollbars -->
<div class="a" style="left:264px;top:216px;width:12px;height:460px;background:#f0f0f0"></div>
<div class="a" style="left:264px;top:216px;width:12px;height:16px;background:linear-gradient(#f2f2f2,#d8d8d8);border:1px solid #bbb;box-sizing:border-box"></div>
<div class="a" style="left:267px;top:222px;border-left:3px solid transparent;border-right:3px solid transparent;border-bottom:4px solid #555"></div>
<div class="a" style="left:264px;top:233px;width:12px;height:192px;background:linear-gradient(90deg,#bfe2f6,#a4d4f0 50%,#8cc6ea);border:1px solid #5a9cc4;box-sizing:border-box"></div>
<div class="a" style="left:267px;top:325px;width:7px;height:8px;border-top:1px solid #4a7fa0;border-bottom:1px solid #4a7fa0;box-sizing:border-box"></div>
<div class="a" style="left:267px;top:328px;width:7px;height:1px;background:#4a7fa0"></div>
<div class="a" style="left:264px;top:660px;width:12px;height:16px;background:linear-gradient(#f2f2f2,#d8d8d8);border:1px solid #bbb;box-sizing:border-box"></div>
<div class="a" style="left:268px;top:666px;border-left:3px solid transparent;border-right:3px solid transparent;border-top:4px solid #555"></div>
<div class="a" style="left:32px;top:677px;width:230px;height:16px;background:#f0f0f0"></div>
<div class="a" style="left:49px;top:677px;width:135px;height:15px;background:linear-gradient(#f4f4f4,#d4d4d4);border:1px solid #aaa;box-sizing:border-box;border-radius:2px"></div>
<div class="a" style="left:112px;top:682px;width:7px;height:6px;border-left:1px solid #555;border-right:1px solid #555;box-sizing:border-box"></div><div class="a" style="left:115px;top:682px;width:1px;height:6px;background:#555"></div>
<div class="a" style="left:37px;top:681px;border-top:4px solid transparent;border-bottom:4px solid transparent;border-right:4px solid #555"></div>
<div class="a" style="left:252px;top:681px;border-top:4px solid transparent;border-bottom:4px solid transparent;border-left:4px solid #555"></div>
<div class="a" style="left:278px;top:386px;width:9px;height:39px;background:#f7f7f7;border:1px solid #888;border-left:0;box-sizing:border-box"></div>
<div class="a" style="left:279px;top:402px;width:6px;height:6px;background:#ccc;border:1px solid #999;border-radius:50%;box-sizing:border-box"></div>

<!-- bottom tabs -->
<div class="a" style="left:0;top:694px;width:1365px;height:16px;background:#f7f7f7;border-top:1px solid #888;border-bottom:1px solid #888;box-sizing:border-box"></div>
<div class="a" style="left:34px;top:695px;width:64px;height:14px;background:#b8b8b8;border-left:1px solid #8ab"></div>
<svg style="left:36px;top:696px" width="62" height="12" fill="#999"><path d="M4 2v8M11 2L6 6l5 4zM26 2l-5 4 5 4zM37 2l5 4-5 4zM52 2l5 4-5 4zM58 2v8" stroke="#999"/></svg>
<div class="t" style="left:111px;top:694px;font-weight:bold;letter-spacing:-.1px">Model</div>
<div class="btab" style="left:156px;width:68px;border-left:1px solid #888">3D Views</div>
<div class="btab" style="left:224px;width:108px;padding-right:8px">Motion Study 1</div>

<!-- status -->
<div class="a" style="left:0;top:710px;width:1365px;height:15px;background:#e4e4e4"></div>
<div class="t" style="left:1px;top:712px;letter-spacing:-.42px">SOLIDWORKS Premium 2016 x64 Edition</div>
<div class="a" style="left:1093px;top:710px;width:1px;height:15px;background:#ccc"></div>
<div class="t" style="left:1105px;top:712px;letter-spacing:-.1px">Editing Part</div>
<div class="a" style="left:1171px;top:710px;width:1px;height:15px;background:#ccc"></div>
<div class="a" style="left:1188px;top:710px;width:1px;height:15px;background:#ccc"></div>
<div class="t" style="left:1220px;top:712px">MMGS</div>
<div class="a" style="left:1275px;top:719px;border-left:3px solid transparent;border-right:3px solid transparent;border-bottom:3px solid #444"></div>
<svg style="left:1347px;top:712px" width="16" height="13" fill="#eee" stroke="#444"><path d="M1 4l6-3 8 4v5l-5 3-8-5z"/></svg>
</body></html>
